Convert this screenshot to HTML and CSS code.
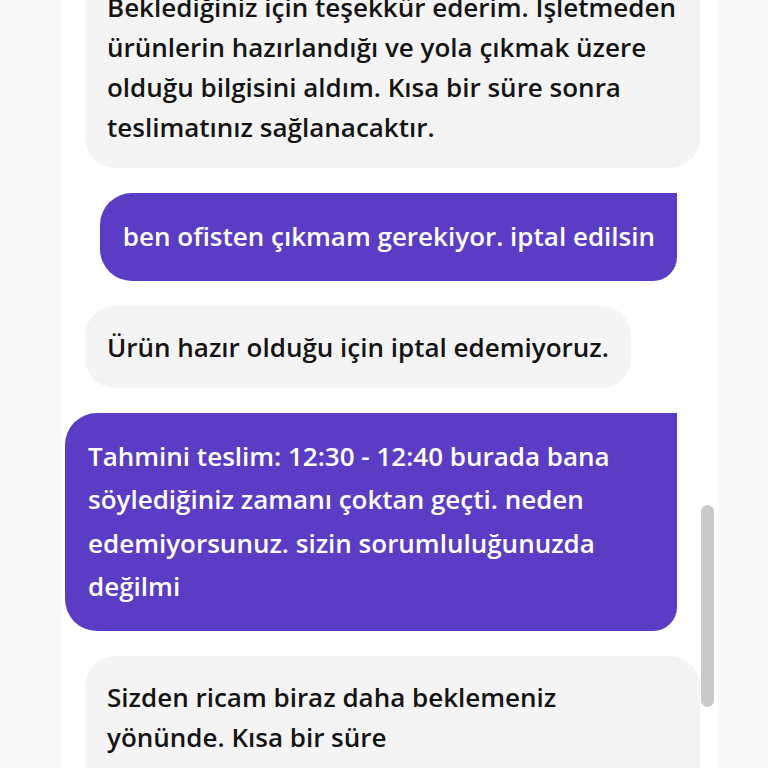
FILE: index.html
```html
<!DOCTYPE html>
<html lang="tr">
<head>
<meta charset="utf-8">
<link rel="stylesheet" href="styles.css">
</head>
<body>
<div class="page">
  <div class="panel">
    <div class="messages">
      <div class="msg agent wide">Beklediğiniz için teşekkür ederim. İşletmeden<br>ürünlerin hazırlandığı ve yola çıkmak üzere<br>olduğu bilgisini aldım. Kısa bir süre sonra<br>teslimatınız sağlanacaktır.</div>
      <div class="msg user">ben ofisten çıkmam gerekiyor. iptal edilsin</div>
      <div class="msg agent">Ürün hazır olduğu için iptal edemiyoruz.</div>
      <div class="msg user">Tahmini teslim: 12:30 - 12:40 burada bana söylediğiniz zamanı çoktan geçti. neden edemiyorsunuz. sizin sorumluluğunuzda değilmi</div>
      <div class="msg agent wide">Sizden ricam biraz daha beklemeniz<br>yönünde. Kısa bir süre<br>içerisinde teslimatınız sağlanacaktır.</div>
    </div>
    <div class="scrollbar"><div class="thumb"></div></div>
  </div>
</div>
</body>
</html>
```
FILE: styles.css
```css
html, body {
  margin: 0;
  padding: 0;
  background: #f8f8f8;
  overflow: hidden;
}
.page {
  width: 768px;
  height: 768px;
  display: flex;
  justify-content: flex-start;
  overflow: hidden;
}
.panel {
  margin-left: 62px;
  width: 656px;
  height: 768px;
  background: #ffffff;
  position: relative;
  overflow: hidden;
}
.messages {
  margin-top: -34px;
  padding: 0 41px 0 0;
  display: flex;
  flex-direction: column;
  gap: 25px;
  font-family: "Open Sans", "Noto Sans", sans-serif;
  font-weight: 600;
  font-size: 26px;
}
.msg {
  box-sizing: border-box;
  white-space: nowrap;
}
.agent {
  align-self: flex-start;
  margin-left: 23px;
  max-width: 615px;
  background: #f4f4f4;
  color: #141414;
  padding: 21px 22px;
  line-height: 40px;
  border-radius: 30px;
}
.wide {
  width: 615px;
}
.user {
  white-space: normal;
  align-self: flex-end;
  max-width: 612px;
  background: #5b3cc4;
  color: #ffffff;
  padding: 22px 22px 22px 23px;
  line-height: 43.5px;
  border-radius: 32px 0 24px 32px;
}
.scrollbar {
  position: absolute;
  left: 639px;
  top: 505px;
  width: 13px;
  height: 202px;
}
.thumb {
  width: 100%;
  height: 100%;
  background: #c9c9c9;
  border-radius: 7px;
}
```
